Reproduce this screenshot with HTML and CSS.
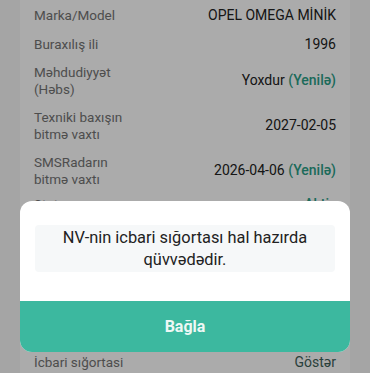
FILE: index.html
```html
<!DOCTYPE html>
<html lang="az">
<head>
<meta charset="utf-8">
<link rel="stylesheet" href="styles.css">
</head>
<body>
<div class="card">
  <div class="row"><div class="label">Marka/Model</div><div class="value">OPEL OMEGA MİNİK</div></div>
  <div class="row"><div class="label">Buraxılış ili</div><div class="value">1996</div></div>
  <div class="row"><div class="label">Məhdudiyyət<br>(Həbs)</div><div class="value">Yoxdur <span class="link">(Yenilə)</span></div></div>
  <div class="row"><div class="label">Texniki baxışın<br>bitmə vaxtı</div><div class="value">2027-02-05</div></div>
  <div class="row"><div class="label">SMSRadarın<br>bitmə vaxtı</div><div class="value">2026-04-06 <span class="link">(Yenilə)</span></div></div>
  <div class="row status"><div class="label">Status</div><div class="value link">Aktiv</div></div>
  <div class="row spaced"><div class="label">İcbari sığortasi</div><div class="value action">Göstər</div></div>
</div>
<div class="overlay"></div>
<div class="modal">
  <div class="modal-body">
    <div class="message">NV-nin icbari sığortası hal hazırda<br>qüvvədədir.</div>
  </div>
  <button class="btn">Bağla</button>
</div>
</body>
</html>
```
FILE: styles.css
```css
html, body {
  margin: 0;
  padding: 0;
  height: 100%;
  overflow: hidden;
}
body {
  background: #f6f6f6;
  font-family: Roboto, "Noto Sans", "Liberation Sans", sans-serif;
}
.card {
  margin: 0 20px;
  background: #ffffff;
  padding: 1px 14px 0;
  min-height: 400px;
}
.row {
  display: flex;
  justify-content: space-between;
  align-items: center;
  padding: 6px 0;
  font-size: 13.5px;
  line-height: 16.5px;
}
.row.status {
  margin-top: -3px;
}
.row.spaced {
  margin-top: 129px;
}
.label {
  color: #747474;
}
.value {
  color: #222222;
  text-align: right;
  font-size: 14px;
}
.link {
  color: #2b9e87;
  font-weight: 500;
}
.action {
  color: #3e615a;
}
.overlay {
  position: fixed;
  inset: 0;
  background: rgba(0, 0, 0, 0.33);
}
.modal {
  position: fixed;
  left: 20px;
  right: 20px;
  bottom: 21px;
  background: #ffffff;
  border-radius: 12px;
  overflow: hidden;
  display: flex;
  flex-direction: column;
}
.modal-body {
  padding: 24px 15px 29px;
}
.message {
  background: #f6f8f9;
  border-radius: 4px;
  padding: 0 8px;
  height: 47px;
  display: flex;
  align-items: center;
  justify-content: center;
  text-align: center;
  font-size: 16.4px;
  line-height: 22px;
  color: #222222;
}
.btn {
  border: 0;
  margin: 0;
  height: 51px;
  background: #3cb89f;
  color: #eef8f5;
  font-family: Roboto, "Noto Sans", "Liberation Sans", sans-serif;
  font-size: 16px;
  font-weight: 700;
  width: 100%;
}
```
